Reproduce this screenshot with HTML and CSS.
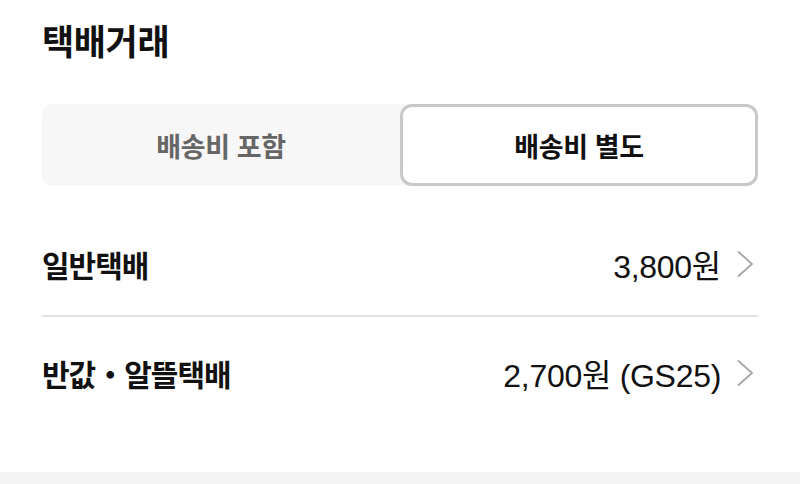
FILE: index.html
```html
<!DOCTYPE html>
<html lang="ko">
<head>
<meta charset="utf-8">
<link rel="stylesheet" href="styles.css">
</head>
<body>
<div class="page">
  <h1 class="title">택배거래</h1>
  <div class="segment">
    <div class="seg-item">배송비 포함</div>
    <div class="seg-item active">배송비 별도</div>
  </div>
  <ul class="options">
    <li class="option first">
      <span class="label">일반택배</span>
      <span class="price">3,800원</span>
      <svg class="chev" width="18" height="28" viewBox="0 0 18 28"><path d="M2 1.5 L16 14 L2 26.5" fill="none" stroke="#a6a6a6" stroke-width="1.8"/></svg>
    </li>
    <li class="option second">
      <span class="label">반값・알뜰택배</span>
      <span class="price">2,700원 (GS25)</span>
      <svg class="chev" width="18" height="28" viewBox="0 0 18 28"><path d="M2 1.5 L16 14 L2 26.5" fill="none" stroke="#a6a6a6" stroke-width="1.8"/></svg>
    </li>
  </ul>
</div>
<div class="band"></div>
</body>
</html>
```
FILE: styles.css
```css
* { box-sizing: border-box; }
html, body { margin: 0; padding: 0; background: #fff; }
body {
  width: 800px;
  height: 484px;
  overflow: hidden;
  display: flex;
  flex-direction: column;
  font-family: "Liberation Sans", "Noto Sans CJK KR", sans-serif;
  color: #111;
}
.page {
  flex: 1;
  padding: 0 42px;
}
.title {
  margin: 18px 0 0;
  height: 44px;
  line-height: 44px;
  font-family: "Noto Sans CJK KR", sans-serif;
  font-size: 35px;
  font-weight: 700;
  letter-spacing: -0.4px;
  color: #111;
}
.segment {
  margin-top: 42px;
  height: 82px;
  display: grid;
  grid-template-columns: 1fr 1fr;
  background: #f7f7f7;
  border-radius: 10px;
}
.seg-item {
  display: flex;
  align-items: center;
  justify-content: center;
  font-family: "Noto Sans CJK KR", sans-serif;
  font-size: 27px;
  font-weight: 700;
  letter-spacing: -0.4px;
  color: #666;
  border-radius: 12px;
}
.seg-item.active {
  background: #fff;
  border: 3px solid #c8c8c8;
  color: #111;
}
.options {
  list-style: none;
  margin: 26px 0 0;
  padding: 0;
}
.option {
  display: flex;
  align-items: center;
}
.option.first {
  height: 105px;
  border-bottom: 2px solid #e2e2e2;
}
.option.second {
  height: 112px;
}
.label {
  flex: 1;
  font-family: "Noto Sans CJK KR", sans-serif;
  font-size: 30px;
  font-weight: 700;
  letter-spacing: -1px;
  color: #111;
}
.price {
  font-size: 32px;
  font-weight: 400;
  color: #111;
  letter-spacing: -0.3px;
}
.chev {
  margin-left: 15px;
  margin-right: 4px;
}
.band {
  height: 12px;
  background: #f4f4f4;
}
```
